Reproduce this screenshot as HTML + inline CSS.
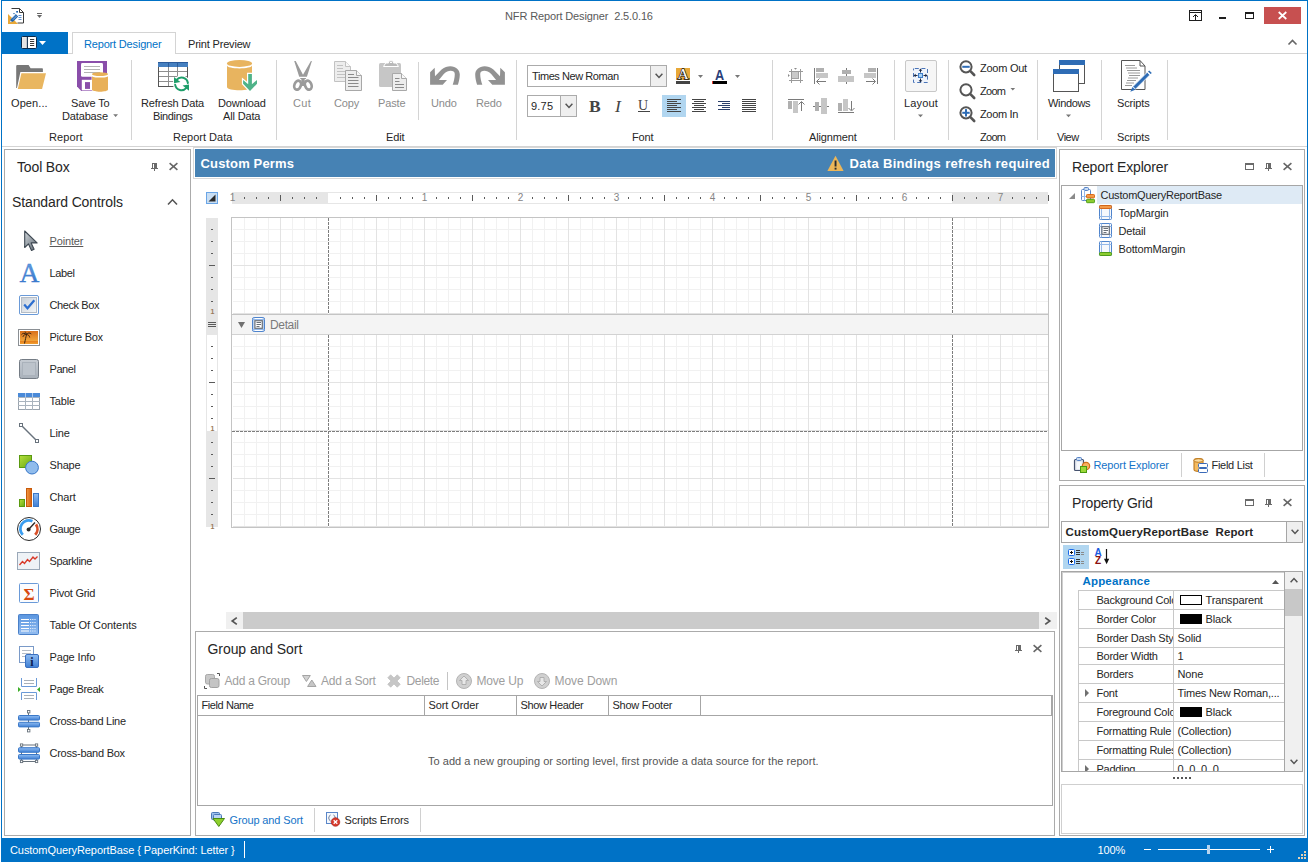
<!DOCTYPE html>
<html lang="en">
<head>
<meta charset="utf-8">
<title>NFR Report Designer 2.5.0.16</title>
<style>
html,body{margin:0;padding:0;}
body{width:1310px;height:866px;background:#fff;position:relative;overflow:hidden;
 font-family:"Liberation Sans",sans-serif;font-size:11px;color:#262626;line-height:1;}
*{box-sizing:border-box;}
.a{position:absolute;}
.t{position:absolute;white-space:pre;line-height:1;letter-spacing:-0.15px;}
svg{position:absolute;overflow:visible;}
.win{left:1px;top:0;width:1307px;height:862px;border:1px solid #0072c6;background:#fff;}
.panel{border:1px solid #ababab;background:#fff;}
.ptitle{font-size:15px;color:#262626;}
.sep{width:1px;background:#d4d4d4;}
.gcap{font-size:11px;color:#262626;}
.tb{font-size:11px;color:#262626;}
.dis{color:#8c8c8c;}
</style>
</head>
<body>
<div class="a win"></div>
<!-- ===== Title bar ===== -->
<div class="a" id="titlebar" style="left:2px;top:1px;width:1305px;height:31px;">
  <!-- app icon -->
  <svg style="left:6px;top:7px" width="16" height="16" viewBox="0 0 16 16">
    <path d="M3.5 0.5h8l4 4v10.5h-6" fill="#fff" stroke="#3a3a3a" stroke-width="1"/>
    <path d="M11.5 0.5v4h4" fill="none" stroke="#3a3a3a" stroke-width="1"/>
    <path d="M10.5 7.5h3M10.5 9.5h3M10.5 11.5h3" stroke="#5b8fd0" stroke-width="1"/>
    <path d="M0 6v10h10z" fill="#e8a838"/>
    <path d="M2 14.3l0.8-3.2 5-5 2.4 2.4-5 5z" fill="#1e63b0"/>
    <path d="M2 14.3l.5-1.9 1.4 1.4z" fill="#fff"/>
    <path d="M3.6 10.6l4-4M4.8 11.8l4-4" stroke="#fff" stroke-width=".5"/>
    <rect x="8.2" y="3" width="1.8" height="1.6" fill="#1e63b0"/>
    <rect x="5.4" y="5" width="1.2" height="1.1" fill="#1e63b0"/>
  </svg>
  <!-- quick access dropdown -->
  <svg style="left:35px;top:12px" width="5" height="5" viewBox="0 0 5 5"><rect x="0" y="0" width="5" height="1" fill="#666"/><path d="M0 2h5L2.5 5z" fill="#666"/></svg>
  <span class="t" style="left:503px;top:10px;color:#595959;letter-spacing:-0.13px">NFR Report Designer  2.5.0.16</span>
  <!-- window buttons -->
  <svg style="left:1187px;top:9px" width="13" height="11" viewBox="0 0 13 11" shape-rendering="crispEdges">
    <rect x="0.5" y="0.5" width="12" height="10" fill="none" stroke="#1e1e1e"/>
    <rect x="1" y="2" width="11" height="1" fill="#1e1e1e"/>
    <rect x="6" y="5" width="1" height="5" fill="#1e1e1e"/>
    <path d="M4 7l2.5-2.5L9 7" fill="none" stroke="#1e1e1e" shape-rendering="auto"/>
  </svg>
  <div class="a" style="left:1217px;top:16px;width:7px;height:2px;background:#1e1e1e"></div>
  <div class="a" style="left:1243px;top:11px;width:9px;height:7px;border:1px solid #1e1e1e;border-top-width:2px"></div>
  <div class="a" style="left:1262px;top:6px;width:37px;height:17px;background:#c75050"></div>
  <svg style="left:1276px;top:11px" width="9" height="7" viewBox="0 0 9 7"><path d="M0.7 0l7.6 7M8.3 0L0.7 7" stroke="#fff" stroke-width="1.7" fill="none"/></svg>
</div>
<!-- ===== Ribbon tab row ===== -->
<div class="a" id="tabrow" style="left:2px;top:32px;width:1305px;height:22px;">
  <div class="a" style="left:0;top:21px;width:1305px;height:1px;background:#d4d4d4"></div>
  <div class="a" id="appbtn" style="left:0;top:0;width:66px;height:22px;background:#0072c6">
    <svg style="left:19px;top:4px" width="16" height="13" viewBox="0 0 16 13">
      <rect x="0.5" y="0.5" width="15" height="12" rx="1.2" fill="#fff" stroke="#0a2a4a" stroke-width="1"/>
      <rect x="1.2" y="1.2" width="4.3" height="10.6" fill="#e4e4e4"/>
      <rect x="5.8" y="0.8" width="1.1" height="11.6" fill="#0a2a4a"/>
      <path d="M9 3.5h4.2M9 5.5h4.2M9 7.5h4.2M9 9.5h4.2" stroke="#3a3a3a" stroke-width="1"/>
    </svg>
    <svg style="left:37px;top:9px" width="7" height="4" viewBox="0 0 7 4"><path d="M0 0h7L3.5 4z" fill="#fff"/></svg>
  </div>
  <div class="a" id="tab-designer" style="left:70px;top:0;width:104px;height:22px;border:1px solid #d4d4d4;border-bottom:none;background:#fff">
    <span class="t" style="left:11px;top:6px;color:#0072c6;letter-spacing:-0.175px">Report Designer</span>
  </div>
  <span class="t" id="tab-preview" style="left:186px;top:7px;color:#262626;letter-spacing:-0.19px">Print Preview</span>
  <svg style="left:1286px;top:7px" width="9" height="7" viewBox="0 0 9 7"><path d="M0.5 5.5l4-4 4 4" stroke="#666" stroke-width="1.6" fill="none"/></svg>
</div>
<!-- ===== Ribbon ===== -->
<div class="a" id="ribbon" style="left:2px;top:54px;width:1305px;height:93px;background:#fff;border-bottom:1px solid #d4d4d4"></div>
<!-- group separators -->
<div class="a sep" style="left:131px;top:60px;height:80px"></div>
<div class="a sep" style="left:276px;top:60px;height:80px"></div>
<div class="a sep" style="left:418px;top:62px;height:58px"></div>
<div class="a sep" style="left:516px;top:60px;height:80px"></div>
<div class="a sep" style="left:772px;top:60px;height:80px"></div>
<div class="a sep" style="left:894px;top:60px;height:80px"></div>
<div class="a sep" style="left:948px;top:60px;height:80px"></div>
<div class="a sep" style="left:1037px;top:60px;height:80px"></div>
<div class="a sep" style="left:1101px;top:60px;height:80px"></div>
<div class="a sep" style="left:1167px;top:60px;height:80px"></div>
<!-- group captions -->
<span class="t gcap" style="left:49px;top:132px;letter-spacing:.1px">Report</span>
<span class="t gcap" style="left:173px;top:132px;letter-spacing:0">Report Data</span>
<span class="t gcap" style="left:386px;top:132px">Edit</span>
<span class="t gcap" style="left:632px;top:132px">Font</span>
<span class="t gcap" style="left:809px;top:132px">Alignment</span>
<span class="t gcap" style="left:980px;top:132px;letter-spacing:-0.7px">Zoom</span>
<span class="t gcap" style="left:1057px;top:132px;letter-spacing:-0.5px">View</span>
<span class="t gcap" style="left:1117px;top:132px">Scripts</span>
<!-- large button captions -->
<span class="t tb" style="left:11px;top:98px;letter-spacing:.1px">Open...</span>
<span class="t tb" style="left:71px;top:98px">Save To</span>
<span class="t tb" style="left:62px;top:111px">Database</span>
<span class="t tb" style="left:141px;top:98px">Refresh Data</span>
<span class="t tb" style="left:153px;top:111px;letter-spacing:-0.35px">Bindings</span>
<span class="t tb" style="left:218px;top:98px">Download</span>
<span class="t tb" style="left:223px;top:111px">All Data</span>
<span class="t tb dis" style="left:293px;top:98px;letter-spacing:.3px">Cut</span>
<span class="t tb dis" style="left:334px;top:98px">Copy</span>
<span class="t tb dis" style="left:378px;top:98px">Paste</span>
<span class="t tb dis" style="left:431px;top:98px">Undo</span>
<span class="t tb dis" style="left:476px;top:98px">Redo</span>
<span class="t tb" style="left:904px;top:98px;letter-spacing:.15px">Layout</span>
<span class="t tb" style="left:980px;top:63px;letter-spacing:-0.25px">Zoom Out</span>
<span class="t tb" style="left:980px;top:86px;letter-spacing:-0.7px">Zoom</span>
<span class="t tb" style="left:980px;top:109px;letter-spacing:-0.35px">Zoom In</span>
<span class="t tb" style="left:1048px;top:98px;letter-spacing:-0.35px">Windows</span>
<span class="t tb" style="left:1117px;top:98px">Scripts</span>
<!-- font combo boxes -->
<div class="a" id="fontname" style="left:527px;top:65px;width:140px;height:22px;border:1px solid #ababab;background:#fff">
  <span class="t" style="left:4px;top:5px;color:#262626;letter-spacing:-0.43px">Times New Roman</span>
  <div class="a" style="left:122px;top:-1px;width:17px;height:22px;border:1px solid #ababab;background:#efefef"></div>
  <svg style="left:127px;top:7px" width="8" height="6" viewBox="0 0 8 6"><path d="M0.6 0.8l3.4 3.6 3.4-3.6" fill="none" stroke="#555" stroke-width="1.5"/></svg>
</div>
<div class="a" id="fontsize" style="left:527px;top:95px;width:50px;height:22px;border:1px solid #ababab;background:#fff">
  <span class="t" style="left:3px;top:5px;color:#262626;letter-spacing:.2px">9.75</span>
  <div class="a" style="left:32px;top:-1px;width:17px;height:22px;border:1px solid #ababab;background:#efefef"></div>
  <svg style="left:37px;top:7px" width="8" height="6" viewBox="0 0 8 6"><path d="M0.6 0.8l3.4 3.6 3.4-3.6" fill="none" stroke="#555" stroke-width="1.5"/></svg>
</div>
<!-- B I U -->
<span class="t" style="left:589px;top:98px;font-family:'Liberation Serif',serif;font-weight:bold;font-size:17.5px;color:#444;letter-spacing:0">B</span>
<span class="t" style="left:615px;top:98px;font-family:'Liberation Serif',serif;font-style:italic;font-size:17.5px;color:#444;letter-spacing:0">I</span>
<span class="t" style="left:638px;top:99px;font-family:'Liberation Serif',serif;font-size:14px;color:#444;letter-spacing:0">U</span>
<div class="a" style="left:638px;top:111px;width:12px;height:1px;background:#444"></div>
<!-- align-left highlighted -->
<div class="a" style="left:662px;top:95px;width:24px;height:22px;background:#b1d6f0"></div>
<!-- Layout button frame -->
<div class="a" style="left:905px;top:60px;width:32px;height:32px;border:1px solid #c8c8c8;border-radius:2px;background:#f6f6f6"></div>
<!-- ===== Ribbon icons (absolute page coordinates) ===== -->
<svg id="ribbon-icons" style="left:0;top:0" width="1310" height="150" viewBox="0 0 1310 150">
  <!-- Open (folder) -->
  <path d="M16.200 66q0-1 1-1h11.400l2 3.200h11.600q.700 0 .700.700v3.100H20.400l-3.400 16h-.800z" fill="#777"/>
  <path d="M21.400 73.200H46l-3.900 15.700H17.800z" fill="#e9b660" stroke="#fff" stroke-width="1" paint-order="stroke"/>
  <!-- Save to database -->
  <path d="M77 61h30v30H81.300L77 86.600z" fill="#8a4eaa"/>
  <rect x="81" y="63" width="22" height="13.800" rx="1.400" fill="#fff"/>
  <path d="M84 66.500h16M84 69.500h16M84 72.500h16" stroke="#b4b4b4" stroke-width="1"/>
  <rect x="81.800" y="79.800" width="12.200" height="10.600" fill="#fff"/>
  <rect x="85" y="82.100" width="5" height="6.800" fill="#8a4eaa"/>
  <path d="M91.600 74v15.800c0 3 17 3 17 0V74z" fill="#fff"/>
  <path d="M92 75.900v13.700c0 2.900 16 2.900 16 0V75.900c0 2.200-16 2.200-16 0z" fill="#e8b058"/>
  <ellipse cx="100" cy="74.200" rx="8" ry="1.900" fill="#e8b058"/>
  <path d="M113.200 114.300h4.800l-2.400 2.800z" fill="#777"/>
  <!-- Refresh data bindings (table) -->
  <rect x="158.500" y="62.500" width="29" height="24" fill="#fff" stroke="#555"/>
  <path d="M159 71.500h28M159 76.500h28M159 81.500h28M168.500 67v19M177.500 67v19" stroke="#8e8e8e" stroke-width="1" fill="none"/>
  <rect x="158" y="62" width="30" height="5" fill="#4680c0"/>
  <rect x="158" y="62" width="30" height="1" fill="#2c5c9c"/>
  <path d="M168.500 62v5M177.500 62v5" stroke="#2c5c9c" stroke-width="1"/>
  <circle cx="181.500" cy="83.800" r="8.600" fill="#fff"/>
  <g fill="none" stroke="#1e9e6a" stroke-width="2" stroke-linecap="round">
    <path d="M187.900 83A6.400 6.400 0 0 0 176.600 79.800"/>
    <path d="M175.200 84.800A6.400 6.400 0 0 0 186.400 87.900"/>
  </g>
  <path d="M174 77v6.200l6.400-1.100z" fill="#1e9e6a"/>
  <path d="M189 90.700v-6.200l-6.400 1.100z" fill="#1e9e6a"/>
  <!-- Download all data -->
  <path d="M227 65.300v21.700c0 4.400 25 4.400 25 0V65.300c0 4.200-25 4.200-25 0z" fill="#e8b45f"/>
  <ellipse cx="239.500" cy="63.400" rx="12.600" ry="3.500" fill="#e8b45f"/>
  <path d="M248.200 74H251.900V84.200L257 80V83.800L250 91.100L243.100 83.800V80L248.200 84.200Z" fill="#fff" stroke="#fff" stroke-width="2.400" stroke-linejoin="miter"/>
  <path d="M248.200 74H251.900V84.200L257 80V83.800L250 91.100L243.100 83.800V80L248.200 84.200Z" fill="#4fb389"/>
  <!-- Cut -->
  <path d="M294.200 61L295.700 61L303 74.800L310.900 61L311.900 61L306.900 76.800L299.200 76.800Z" fill="#9b9b9b"/>
  <path d="M300.300 77.900h5.600v1h-1.200v7h-3.400v-7h-1z" fill="#9b9b9b"/>
  <g fill="none" stroke="#9b9b9b" stroke-width="2.700">
    <ellipse cx="297.600" cy="85.200" rx="3.200" ry="4.600" transform="rotate(20 297.600 85.200)"/>
    <ellipse cx="308.300" cy="85.200" rx="3.200" ry="4.600" transform="rotate(-20 308.300 85.200)"/>
  </g>
  <!-- Copy -->
  <path d="M334.500 61.500h11l5 5v15h-16z" fill="#ededed" stroke="#c2c2c2"/>
  <path d="M345.500 61.500v5h5" fill="#f8f8f8" stroke="#c2c2c2"/>
  <path d="M337 65.500h6M337 68.500h6M337 71.500h10M337 74.500h10M337 77.500h10" stroke="#c2c2c2"/>
  <path d="M345.500 70.500h11l5 5v15h-16z" fill="#ededed" stroke="#a8a8a8"/>
  <path d="M356.500 70.500v5h5" fill="#f8f8f8" stroke="#a8a8a8"/>
  <path d="M348 74.500h6M348 77.500h10.500M348 80.500h10.500M348 83.500h10.500M348 86.500h10.500" stroke="#8a8a8a"/>
  <!-- Paste -->
  <rect x="379" y="63" width="22" height="24" rx="1.500" fill="#c6c6c6"/>
  <path d="M383.500 66.500l2.200-3.500h2.800c0-3.600 5-3.600 5 0h2.800l2.200 3.500z" fill="#b9b9b9" stroke="#fff" stroke-width="1"/>
  <rect x="390" y="61.700" width="2" height="1.300" fill="#fff"/>
  <path d="M392.500 73.500h9l5 5v12h-14z" fill="#ededed" stroke="#a8a8a8"/>
  <path d="M401.500 73.500v5h5" fill="#f8f8f8" stroke="#a8a8a8"/>
  <path d="M395 78.500h4.500M395 81.500h4.500M395 84.500h9M395 87.500h9" stroke="#8a8a8a"/>
  <!-- Undo -->
  <path d="M430.100 72.300L434.700 67.800L435 76.300L441.600 69.400C444.500 67 447.500 66.200 450.300 66.200C456 66.200 459.800 70 459.800 74.500C459.800 78 458.800 82 457.900 84.800L452.700 84.800C453.800 81.500 454.800 77.500 454.800 73.900C454.800 71.800 453 70.700 450.600 70.700C448.500 70.700 446 71.800 443.800 74L438.900 79.900L447 79.900L442.700 84.800L430.100 84.800Z" fill="#929292"/>
  <!-- Redo -->
  <path d="M430.100 72.300L434.700 67.800L435 76.300L441.600 69.400C444.500 67 447.500 66.200 450.300 66.200C456 66.200 459.800 70 459.800 74.500C459.800 78 458.800 82 457.900 84.800L452.700 84.800C453.800 81.500 454.800 77.500 454.800 73.900C454.800 71.800 453 70.700 450.600 70.700C448.500 70.700 446 71.800 443.800 74L438.900 79.900L447 79.900L442.700 84.800L430.100 84.800Z" fill="#929292" transform="translate(935 0) scale(-1 1)"/>
</svg>
<!-- ===== Ribbon icons part 2: font / alignment / layout / zoom / view / scripts ===== -->
<svg id="ribbon-icons2" style="left:0;top:0" width="1310" height="150" viewBox="0 0 1310 150">
  <!-- highlight color -->
  <rect x="676" y="68" width="14" height="12" fill="#e8a838"/>
  <text x="683" y="79.300" text-anchor="middle" font-family="Liberation Serif, serif" font-size="15.500" fill="#fff" stroke="#111" stroke-width="1.300" paint-order="stroke" style="-webkit-font-smoothing:antialiased">A</text>
  <rect x="676" y="81" width="14" height="3" fill="#444"/>
  <path d="M698 75h5l-2.500 3z" fill="#777"/>
  <!-- font color -->
  <text transform="translate(719.500 79.700) scale(.82 1)" x="0" y="0" text-anchor="middle" font-family="Liberation Sans, sans-serif" font-size="15.500" font-weight="bold" fill="#2a3f7a">A</text>
  <rect x="712" y="81" width="15" height="3" fill="#000"/>
  <rect x="712" y="81" width="1" height="3" fill="#e03c31"/>
  <path d="M735 75h5l-2.500 3z" fill="#777"/>
  <!-- text align buttons -->
  <g fill="#444" shape-rendering="crispEdges">
    <rect x="667" y="99" width="14" height="1"/><rect x="667" y="101" width="10" height="1"/><rect x="667" y="103" width="14" height="1"/><rect x="667" y="105" width="10" height="1"/><rect x="667" y="107" width="14" height="1"/><rect x="667" y="109" width="10" height="1"/><rect x="667" y="111" width="14" height="1"/>
    <rect x="692" y="99" width="14" height="1"/><rect x="694" y="101" width="10" height="1"/><rect x="692" y="103" width="14" height="1"/><rect x="694" y="105" width="10" height="1"/><rect x="692" y="107" width="14" height="1"/><rect x="694" y="109" width="10" height="1"/><rect x="692" y="111" width="14" height="1"/>
    <rect x="742" y="99" width="14" height="1"/><rect x="742" y="101" width="14" height="1"/><rect x="742" y="103" width="14" height="1"/><rect x="742" y="105" width="14" height="1"/><rect x="742" y="107" width="14" height="1"/><rect x="742" y="109" width="14" height="1"/><rect x="742" y="111" width="14" height="1"/>
  </g>
  <g fill="#2a3f6a" shape-rendering="crispEdges">
    <rect x="718" y="101" width="12" height="1"/><rect x="722" y="103" width="8" height="1"/><rect x="718" y="105" width="12" height="1"/><rect x="722" y="107" width="8" height="1"/><rect x="718" y="109" width="12" height="1"/>
  </g>
  <!-- alignment group (disabled) -->
  <g shape-rendering="crispEdges">
    <!-- align to grid -->
    <rect x="791" y="69" width="1" height="14" fill="#9a9a9a"/><rect x="800" y="69" width="1" height="14" fill="#9a9a9a"/>
    <rect x="789" y="71" width="14" height="1" fill="#9a9a9a"/><rect x="789" y="80" width="14" height="1" fill="#9a9a9a"/>
    <rect x="792" y="72" width="7" height="7" fill="#c9c9c9"/><rect x="798" y="72" width="1" height="7" fill="#a2a2a2"/><rect x="792" y="78" width="7" height="1" fill="#a2a2a2"/>
    <!-- align lefts -->
    <rect x="814" y="68" width="1" height="16" fill="#7a7a7a"/>
    <rect x="816" y="68" width="8" height="4" fill="#b0b0b0"/><rect x="816" y="73" width="12" height="5" fill="#c6c6c6"/>
    <rect x="817" y="81" width="9" height="1" fill="#7a7a7a"/>
    <!-- align centers -->
    <rect x="846" y="68" width="1" height="16" fill="#7a7a7a"/>
    <rect x="842" y="70" width="9" height="4" fill="#b0b0b0"/><rect x="838" y="76" width="16" height="6" fill="#c6c6c6"/>
    <!-- align rights -->
    <rect x="877" y="68" width="1" height="16" fill="#7a7a7a"/>
    <rect x="868" y="68" width="8" height="4" fill="#b0b0b0"/><rect x="864" y="73" width="12" height="5" fill="#c6c6c6"/>
    <rect x="866" y="81" width="9" height="1" fill="#7a7a7a"/>
    <!-- align tops -->
    <rect x="788" y="99" width="16" height="1" fill="#7a7a7a"/>
    <rect x="788" y="101" width="4" height="8" fill="#b0b0b0"/><rect x="793" y="101" width="5" height="12" fill="#c6c6c6"/>
    <rect x="801" y="102" width="1" height="9" fill="#7a7a7a"/>
    <!-- align middles -->
    <rect x="813" y="106" width="16" height="1" fill="#7a7a7a"/>
    <rect x="815" y="102" width="4" height="9" fill="#b0b0b0"/><rect x="821" y="98" width="6" height="16" fill="#c6c6c6"/>
    <!-- align bottoms -->
    <rect x="838" y="112" width="16" height="1" fill="#7a7a7a"/>
    <rect x="838" y="103" width="4" height="8" fill="#b0b0b0"/><rect x="843" y="99" width="5" height="12" fill="#c6c6c6"/>
    <rect x="851" y="101" width="1" height="9" fill="#7a7a7a"/>
  </g>
  <g fill="none" stroke="#7a7a7a" stroke-width="1">
    <path d="M819.500 78.500l-3 3 3 3"/><path d="M872.500 78.500l3 3-3 3"/>
    <path d="M798.500 104.500l3-3 3 3"/><path d="M848.500 108l3 3 3-3"/>
  </g>
  <path d="M794 68h3l-1.500 1.800z" fill="#8a8a8a"/><path d="M788 74v3l1.800-1.500z" fill="#8a8a8a"/>
  <!-- layout icon -->
  <rect x="913.500" y="68.500" width="14" height="14" fill="#eef3fb" stroke="#4a74b8" stroke-width="1" stroke-dasharray="4 2.600" stroke-dashoffset="-1.300"/>
  <rect x="918.500" y="73.500" width="4" height="4" fill="#a9d3f5" stroke="#3d7cc9" stroke-width="1"/>
  <g fill="#1e2a44">
    <path d="M920.500 68.500l1.800 2.200h-3.600z"/><rect x="920" y="70" width="1" height="2.500"/>
    <path d="M920.500 82.500l1.800-2.200h-3.600z"/><rect x="920" y="78.500" width="1" height="2.500"/>
    <path d="M913.500 75.500l2.200-1.800v3.600z"/><rect x="915" y="75" width="2.500" height="1"/>
    <path d="M927.500 75.500l-2.200-1.800v3.600z"/><rect x="923.500" y="75" width="2.500" height="1"/>
  </g>
  <path d="M918 114.500h5l-2.500 2.800z" fill="#777"/>
  <!-- zoom out / zoom / zoom in -->
  <g fill="none" stroke="#555" stroke-linecap="round">
    <circle cx="966" cy="66.800" r="5.600" stroke-width="2"/><path d="M970.400 71.200l3.800 3.800" stroke-width="2.600"/>
    <circle cx="966" cy="89.800" r="5.600" stroke-width="2"/><path d="M970.400 94.200l3.800 3.800" stroke-width="2.600"/>
    <circle cx="966" cy="112.800" r="5.600" stroke-width="2"/><path d="M970.400 117.200l3.800 3.800" stroke-width="2.600"/>
  </g>
  <rect x="962.300" y="65.800" width="7.400" height="2" fill="#2e6cb5"/>
  <rect x="962.300" y="111.800" width="7.400" height="2" fill="#2e6cb5"/><rect x="965" y="109.100" width="2" height="7.400" fill="#2e6cb5"/>
  <path d="M1010.500 88h4.600l-2.300 2.600z" fill="#777"/>
  <!-- windows -->
  <g shape-rendering="crispEdges">
    <rect x="1059.500" y="60.500" width="25" height="23" fill="#fff" stroke="#555"/>
    <rect x="1059" y="60" width="26" height="5" fill="#2e6cb5"/>
    <rect x="1053.500" y="69.500" width="25" height="22" fill="#fff" stroke="#555"/>
    <rect x="1053" y="69" width="26" height="5" fill="#2e6cb5"/>
  </g>
  <path d="M1066 114.500h5l-2.500 2.800z" fill="#777"/>
  <!-- scripts -->
  <path d="M1121.500 60.500h18.500l5 5.500v23.500h-23.500z" fill="#fff" stroke="#555" stroke-width="1"/>
  <path d="M1140 60.500v5.500h5" fill="none" stroke="#555" stroke-width="1"/>
  <path d="M1125 65.500h10M1126 68h11M1127 70.500h13M1128 73h12M1129 75.500h11M1128 78h10M1127 80.500h9M1126 83h8M1125 85.500h7" stroke="#9a9a9a" stroke-width="1"/>
  <path d="M1147.200 72.300l2.600 2.600-14.300 14.300-2.600-2.600z" fill="#2e6cb5" stroke="#fff" stroke-width=".8"/>
  <path d="M1148 71.500l1.200-1.100 2.600 2.600-1.200 1.100z" fill="#2e6cb5"/>
  <path d="M1132.500 87l2.800 2.800-5 2z" fill="#2e6cb5"/>
</svg>
<!-- ===== Tool Box panel ===== -->
<div class="a panel" id="toolbox" style="left:4px;top:149px;width:187px;height:687px"></div>
<span class="t ptitle" style="left:17px;top:160px;font-size:14px;letter-spacing:-0.14px">Tool Box</span>
<svg style="left:151px;top:163px" width="7" height="8" viewBox="0 0 7 8" shape-rendering="crispEdges"><g fill="#6a6a6a"><rect x="1" y="0" width="5" height="1"/><rect x="1" y="1" width="1" height="4"/><rect x="3" y="1" width="3" height="4"/><rect x="0" y="5" width="7" height="1"/><rect x="3" y="6" width="1" height="2"/></g></svg>
<svg style="left:169px;top:163px" width="9" height="7" viewBox="0 0 9 7"><path d="M0.600 0.200l7.800 6.600M8.400 0.200L0.600 6.800" stroke="#666" stroke-width="1.600" fill="none"/></svg>
<span class="t" style="left:12px;top:195px;font-size:14px;letter-spacing:-0.12px;color:#262626">Standard Controls</span>
<svg style="left:167px;top:198px" width="11" height="8" viewBox="0 0 11 8"><path d="M1 6.500l4.500-4.700 4.500 4.700" stroke="#555" stroke-width="1.600" fill="none"/></svg>
<span class="t" style="left:49.500px;top:236px;color:#595959;text-decoration:underline;text-underline-offset:1px">Pointer</span>
<span class="t" style="left:49.500px;top:268px;color:#262626;letter-spacing:-0.35px">Label</span>
<span class="t" style="left:49.500px;top:300px;color:#262626;letter-spacing:-0.4px">Check Box</span>
<span class="t" style="left:49.500px;top:332px;color:#262626;letter-spacing:-0.27px">Picture Box</span>
<span class="t" style="left:49.500px;top:364px;color:#262626;letter-spacing:-0.45px">Panel</span>
<span class="t" style="left:49.500px;top:396px;color:#262626">Table</span>
<span class="t" style="left:49.500px;top:428px;color:#262626">Line</span>
<span class="t" style="left:49.500px;top:460px;color:#262626">Shape</span>
<span class="t" style="left:49.500px;top:492px;color:#262626">Chart</span>
<span class="t" style="left:49.500px;top:524px;color:#262626;letter-spacing:-0.5px">Gauge</span>
<span class="t" style="left:49.500px;top:556px;color:#262626;letter-spacing:-0.38px">Sparkline</span>
<span class="t" style="left:49.500px;top:588px;color:#262626;letter-spacing:-0.27px">Pivot Grid</span>
<span class="t" style="left:49.500px;top:620px;color:#262626;letter-spacing:-0.05px">Table Of Contents</span>
<span class="t" style="left:49.500px;top:652px;color:#262626">Page Info</span>
<span class="t" style="left:49.500px;top:684px;color:#262626;letter-spacing:-0.35px">Page Break</span>
<span class="t" style="left:49.500px;top:716px;color:#262626;letter-spacing:-0.3px">Cross-band Line</span>
<span class="t" style="left:49.500px;top:748px;color:#262626;letter-spacing:-0.25px">Cross-band Box</span>
<!-- ===== Tool Box icons (absolute page coordinates) ===== -->
<svg id="toolbox-icons" style="left:0;top:0" width="200" height="780" viewBox="0 0 200 780">
  <defs>
    <linearGradient id="gGrey" x1="0" y1="0" x2="1" y2="1"><stop offset="0" stop-color="#cfd5da"/><stop offset="1" stop-color="#5e6871"/></linearGradient>
    <linearGradient id="gBlueA" x1="0" y1="0" x2="0" y2="1"><stop offset="0" stop-color="#6ea6e6"/><stop offset="1" stop-color="#2d6fc4"/></linearGradient>
    <linearGradient id="gChk" x1="0" y1="0" x2="1" y2="1"><stop offset="0" stop-color="#c9d0d8"/><stop offset="1" stop-color="#f4f6f8"/></linearGradient>
    <linearGradient id="gSun" x1="0" y1="0" x2="0" y2="1"><stop offset="0" stop-color="#d9701c"/><stop offset=".75" stop-color="#f0a43a"/><stop offset=".8" stop-color="#e8821e"/><stop offset="1" stop-color="#f0a030"/></linearGradient>
    <linearGradient id="gPanel" x1="0" y1="0" x2="0" y2="1"><stop offset="0" stop-color="#c6ccd3"/><stop offset="1" stop-color="#a9b1ba"/></linearGradient>
    <linearGradient id="gBar" x1="0" y1="0" x2="0" y2="1"><stop offset="0" stop-color="#8ebcf2"/><stop offset="1" stop-color="#3f7fd4"/></linearGradient>
    <linearGradient id="gGreen" x1="0" y1="0" x2="1" y2="1"><stop offset="0" stop-color="#b4e03c"/><stop offset="1" stop-color="#6aa814"/></linearGradient>
    <linearGradient id="gOrange" x1="0" y1="0" x2="1" y2="0"><stop offset="0" stop-color="#f09a48"/><stop offset="1" stop-color="#d8600c"/></linearGradient>
    <linearGradient id="gToc" x1="0" y1="0" x2="0" y2="1"><stop offset="0" stop-color="#5a96e0"/><stop offset="1" stop-color="#92bcf0"/></linearGradient>
  </defs>
  <!-- 0 Pointer -->
  <path d="M24.700 231v16.500l3.800-3.600 3 6.600 2.600-1.200-3-6.400h6z" fill="url(#gGrey)" stroke="#3e4852" stroke-width="1.100" stroke-linejoin="round"/>
  <!-- 1 Label -->
  <text x="29.400" y="282" text-anchor="middle" font-family="Liberation Serif, serif" font-size="27.500" fill="url(#gBlueA)" stroke="#3a7ad0" stroke-width=".350">A</text>
  <!-- 2 Check Box -->
  <rect x="19.500" y="295.500" width="19" height="19" rx="1.500" fill="#fff" stroke="#6a9ad8"/>
  <rect x="21.500" y="297.500" width="15" height="15" fill="url(#gChk)" stroke="#b4bcc6" stroke-width="1"/>
  <path d="M24.200 304.600l3.300 3.700 6.800-8" fill="none" stroke="#2d6fd0" stroke-width="2.200"/>
  <!-- 3 Picture Box -->
  <rect x="18.500" y="329.500" width="21" height="16" fill="#fff" stroke="#8a8f94"/>
  <rect x="20" y="331" width="18" height="13" fill="url(#gSun)"/>
  <path d="M24.500 343.500c.8-4 1.500-6.500 2-9" fill="none" stroke="#3a2410" stroke-width="1"/>
  <path d="M26.500 334.500c-2-1.600-3.600-1.600-5 .2M26.500 334.500c-1.600-.4-3 .6-3.600 2.400M26.500 334.500c1.400-1.800 3.200-2 4.800-.6M26.500 334.500c1.600 0 3 1.200 3.200 3M26.500 334.500c.2-1.400-.6-2.200-1.800-2.600" fill="none" stroke="#3a2410" stroke-width="1"/>
  <!-- 4 Panel -->
  <rect x="19.500" y="359.500" width="19" height="19" rx="2" fill="url(#gPanel)" stroke="#747c85"/>
  <rect x="22.500" y="362.500" width="13" height="13" fill="#bcc3cb" stroke="#aab2bb"/>
  <!-- 5 Table -->
  <rect x="18.500" y="393.500" width="21" height="16" fill="#fff" stroke="#9aa4ae"/>
  <rect x="18" y="393" width="22" height="4.500" fill="#4a8ad8"/>
  <path d="M18 397.500h22M18 401.500h22M18 405.500h22M25.500 393v17M32.500 393v17" stroke="#aab4be" stroke-width="1" fill="none"/>
  <path d="M25.500 393v4.500M32.500 393v4.500" stroke="#a8c8f0" stroke-width="1"/>
  <!-- 6 Line -->
  <path d="M21 425l16 16" stroke="#68727c" stroke-width="1.400"/>
  <rect x="19.500" y="423.500" width="3" height="3" fill="#fff" stroke="#68727c"/>
  <rect x="35.500" y="439.500" width="3" height="3" fill="#fff" stroke="#68727c"/>
  <!-- 7 Shape -->
  <rect x="19.500" y="455.500" width="12" height="12" fill="url(#gGreen)" stroke="#5a9a10"/>
  <circle cx="32" cy="467.600" r="6.400" fill="#90bcec" stroke="#3a78c8"/>
  <!-- 8 Chart -->
  <rect x="19.500" y="499.500" width="5" height="7" fill="url(#gGreen)" stroke="#5a9a10"/>
  <rect x="26.500" y="488.500" width="5" height="18" fill="url(#gOrange)" stroke="#c85a0a"/>
  <rect x="33.500" y="493.500" width="5" height="13" fill="url(#gBar)" stroke="#3a78c8"/>
  <!-- 9 Gauge -->
  <circle cx="29" cy="529" r="11.500" fill="#fff" stroke="#2a2a2a" stroke-width="1"/>
  <path d="M22.800 534.800a8.400 8.400 0 0 1 9.600-13.500" fill="none" stroke="#3a9df0" stroke-width="2.800"/>
  <path d="M36 524.400a8.400 8.400 0 0 1-.8 10.400" fill="none" stroke="#d85028" stroke-width="2.800"/>
  <path d="M29 529l6-6.400" stroke="#2a2a2a" stroke-width="1.400"/>
  <circle cx="28.600" cy="529.400" r="2" fill="#2a2a2a"/>
  <!-- 10 Sparkline -->
  <rect x="17.500" y="552.500" width="22" height="17" fill="#eef2f6" stroke="#9aa8b8"/>
  <path d="M19.500 565l3-3.500 2 2 3-4 2 2 3.500-4.500 2 2 2.500-2.500" fill="none" stroke="#d83828" stroke-width="1.300"/>
  <!-- 11 Pivot Grid -->
  <rect x="19.500" y="583.500" width="19" height="19" rx="1" fill="#fbfcfe" stroke="#6a9ad8"/>
  <text x="29" y="599.500" text-anchor="middle" font-family="Liberation Serif, serif" font-size="17" font-weight="bold" fill="#d84a10">Σ</text>
  <!-- 12 Table Of Contents -->
  <rect x="18.500" y="614.500" width="20" height="20" rx="1" fill="url(#gToc)" stroke="#4a80c8"/>
  <path d="M21 619.500h8M21 622.500h8M21 625.500h8M21 628.500h8M21 631h8" stroke="#fff" stroke-width="1.200"/>
  <path d="M30 619.500h6M30 622.500h6M30 625.500h6M30 628.500h6M30 631h6" stroke="#e4effc" stroke-width="1.200" stroke-dasharray="1.200 1"/>
  <!-- 13 Page Info -->
  <rect x="19.500" y="646.500" width="14" height="16" fill="#fff" stroke="#7a9ac8"/>
  <path d="M22 650.500h9M22 653.500h9M22 656.500h4" stroke="#b4bcc6"/>
  <rect x="25.500" y="654.500" width="13" height="13" rx="1.500" fill="url(#gBar)" stroke="#3a70c0"/>
  <text x="32" y="665.500" text-anchor="middle" font-family="Liberation Serif, serif" font-size="12" font-weight="bold" fill="#0c1c50">i</text>
  <!-- 14 Page Break -->
  <path d="M21.500 678v8.500h15V678" fill="#fff" stroke="#6a9ad8"/>
  <path d="M24 680.500h10M24 683.500h10" stroke="#a8b0b8"/>
  <path d="M21.500 700v-7.500h15v7.500" fill="#fff" stroke="#6a9ad8"/>
  <path d="M24 695.500h10M24 698.500h10" stroke="#a8b0b8"/>
  <path d="M18 687l3 2.500-3 2.500z" fill="#3cae28"/><path d="M40 687l-3 2.500 3 2.500z" fill="#3cae28"/>
  <!-- 15 Cross-band Line -->
  <path d="M28.500 711v20" stroke="#68727c" stroke-width="1"/>
  <rect x="18.500" y="715.500" width="21" height="4.600" rx="1" fill="url(#gBar)" stroke="#3a78c8"/>
  <rect x="18.500" y="722.300" width="21" height="4.600" rx="1" fill="url(#gBar)" stroke="#3a78c8"/>
  <rect x="27.500" y="710.500" width="2.400" height="2.400" fill="#fff" stroke="#68727c" stroke-width=".9"/>
  <rect x="27.500" y="729.500" width="2.400" height="2.400" fill="#fff" stroke="#68727c" stroke-width=".9"/>
  <!-- 16 Cross-band Box -->
  <rect x="21.500" y="745" width="15" height="16.500" fill="none" stroke="#68727c"/>
  <rect x="18.500" y="747.700" width="21" height="4.600" rx="1" fill="url(#gBar)" stroke="#3a78c8"/>
  <rect x="18.500" y="754.500" width="21" height="4.600" rx="1" fill="url(#gBar)" stroke="#3a78c8"/>
  <g fill="#fff" stroke="#68727c" stroke-width=".9"><rect x="20.400" y="743.900" width="2.300" height="2.300"/><rect x="35.400" y="743.900" width="2.300" height="2.300"/><rect x="20.400" y="760.300" width="2.300" height="2.300"/><rect x="35.400" y="760.300" width="2.300" height="2.300"/></g>
</svg>
<!-- ===== Designer (center) ===== -->
<div class="a" id="designer-caption" style="left:193px;top:147px;width:864px;height:32px;border:1px solid #d8d8d8;background:#fff">
  <div class="a" style="left:1px;top:1px;width:860px;height:28px;background:#4682b4"></div>
  <span class="t" style="left:6.500px;top:9px;font-size:13px;font-weight:bold;color:#fff;letter-spacing:.16px">Custom Perms</span>
  <svg style="left:633px;top:7px" width="17" height="17" viewBox="0 0 17 17"><path d="M8.500 0.800L16.600 16H0.400z" fill="#ecb658"/><rect x="7.600" y="5.500" width="1.900" height="6" fill="#2a2a2a"/><rect x="7.600" y="12.700" width="1.900" height="1.900" fill="#2a2a2a"/></svg>
  <span class="t" style="left:655.500px;top:9px;font-size:13px;font-weight:bold;color:#fff;letter-spacing:.33px">Data Bindings refresh required</span>
</div>
<div class="a" style="left:206px;top:192px;width:12px;height:12px;border:1px solid #6aa5e6;background:#c9def3"></div>
<svg style="left:208px;top:194px" width="8" height="8" viewBox="0 0 8 8"><path d="M7.500 0.500v7h-7z" fill="#2a2a2a"/></svg>
<div class="a" id="hruler" style="left:232px;top:192px;width:816px;height:12px;background:#fff;border-top:1px solid #e6e6e6;border-bottom:1px solid #e6e6e6"></div>
<div class="a" style="left:232px;top:192px;width:96px;height:12px;background:#e6e6e6"></div>
<div class="a" style="left:952px;top:192px;width:96px;height:12px;background:#e6e6e6"></div>
<svg id="hruler-ticks" style="left:0;top:0" width="1310" height="210" viewBox="0 0 1310 210" shape-rendering="crispEdges"><g fill="#5a5a5a"><rect x="244" y="197" width="1" height="2"/><rect x="256" y="197" width="1" height="2"/><rect x="268" y="197" width="1" height="2"/><rect x="280" y="195" width="1" height="6"/><rect x="292" y="197" width="1" height="2"/><rect x="304" y="197" width="1" height="2"/><rect x="316" y="197" width="1" height="2"/><rect x="340" y="197" width="1" height="2"/><rect x="352" y="197" width="1" height="2"/><rect x="364" y="197" width="1" height="2"/><rect x="376" y="195" width="1" height="6"/><rect x="388" y="197" width="1" height="2"/><rect x="400" y="197" width="1" height="2"/><rect x="412" y="197" width="1" height="2"/><rect x="436" y="197" width="1" height="2"/><rect x="448" y="197" width="1" height="2"/><rect x="460" y="197" width="1" height="2"/><rect x="472" y="195" width="1" height="6"/><rect x="484" y="197" width="1" height="2"/><rect x="496" y="197" width="1" height="2"/><rect x="508" y="197" width="1" height="2"/><rect x="532" y="197" width="1" height="2"/><rect x="544" y="197" width="1" height="2"/><rect x="556" y="197" width="1" height="2"/><rect x="568" y="195" width="1" height="6"/><rect x="580" y="197" width="1" height="2"/><rect x="592" y="197" width="1" height="2"/><rect x="604" y="197" width="1" height="2"/><rect x="628" y="197" width="1" height="2"/><rect x="640" y="197" width="1" height="2"/><rect x="652" y="197" width="1" height="2"/><rect x="664" y="195" width="1" height="6"/><rect x="676" y="197" width="1" height="2"/><rect x="688" y="197" width="1" height="2"/><rect x="700" y="197" width="1" height="2"/><rect x="724" y="197" width="1" height="2"/><rect x="736" y="197" width="1" height="2"/><rect x="748" y="197" width="1" height="2"/><rect x="760" y="195" width="1" height="6"/><rect x="772" y="197" width="1" height="2"/><rect x="784" y="197" width="1" height="2"/><rect x="796" y="197" width="1" height="2"/><rect x="820" y="197" width="1" height="2"/><rect x="832" y="197" width="1" height="2"/><rect x="844" y="197" width="1" height="2"/><rect x="856" y="195" width="1" height="6"/><rect x="868" y="197" width="1" height="2"/><rect x="880" y="197" width="1" height="2"/><rect x="892" y="197" width="1" height="2"/><rect x="916" y="197" width="1" height="2"/><rect x="928" y="197" width="1" height="2"/><rect x="940" y="197" width="1" height="2"/><rect x="952" y="195" width="1" height="6"/><rect x="964" y="197" width="1" height="2"/><rect x="976" y="197" width="1" height="2"/><rect x="988" y="197" width="1" height="2"/><rect x="1012" y="197" width="1" height="2"/><rect x="1024" y="197" width="1" height="2"/><rect x="1036" y="197" width="1" height="2"/><rect x="1048" y="195" width="1" height="6"/><rect x="1048" y="195" width="1" height="6"/></g><g font-family="Liberation Sans, sans-serif" font-size="10" fill="#848484" text-anchor="middle"><text x="232.5" y="201">1</text><text x="424.5" y="201">1</text><text x="520.5" y="201">2</text><text x="616.5" y="201">3</text><text x="712.5" y="201">4</text><text x="808.5" y="201">5</text><text x="904.5" y="201">6</text><text x="1000.5" y="201">7</text></g></svg>
<div class="a" id="vruler" style="left:206px;top:218px;width:12px;height:309px;background:#e6e6e6"></div>
<div class="a" style="left:207px;top:335px;width:10px;height:96px;background:#fff"></div>
<svg id="vruler-ticks" style="left:0;top:0" width="230" height="540" viewBox="0 0 230 540" shape-rendering="crispEdges"><g fill="#5a5a5a"><rect x="211" y="229" width="2" height="1"/><rect x="211" y="241" width="2" height="1"/><rect x="211" y="253" width="2" height="1"/><rect x="209" y="265" width="6" height="1"/><rect x="211" y="277" width="2" height="1"/><rect x="211" y="289" width="2" height="1"/><rect x="211" y="301" width="2" height="1"/><rect x="211" y="346" width="2" height="1"/><rect x="211" y="358" width="2" height="1"/><rect x="211" y="370" width="2" height="1"/><rect x="209" y="382" width="6" height="1"/><rect x="211" y="394" width="2" height="1"/><rect x="211" y="406" width="2" height="1"/><rect x="211" y="418" width="2" height="1"/><rect x="211" y="442" width="2" height="1"/><rect x="211" y="454" width="2" height="1"/><rect x="211" y="466" width="2" height="1"/><rect x="209" y="478" width="6" height="1"/><rect x="211" y="490" width="2" height="1"/><rect x="211" y="502" width="2" height="1"/><rect x="211" y="514" width="2" height="1"/><rect x="208" y="322" width="8" height="1"/><rect x="208" y="324" width="8" height="1"/><rect x="208" y="326" width="8" height="1"/></g><g font-family="Liberation Sans, sans-serif" font-size="7" font-weight="bold" fill="#9a7a5a" text-anchor="middle" shape-rendering="auto"><text x="212.500" y="314">1</text><text x="212.500" y="431">1</text><text x="212.500" y="529">1</text></g></svg>
<div class="a" id="surface" style="left:231px;top:217px;width:818px;height:311px;border:1px solid #c4c4c4;background:#fff"></div>
<div class="a" id="band-topmargin" style="left:233px;top:218px;width:815px;height:96px;background-image:linear-gradient(to right,transparent 47px,#e3e3e3 47px),linear-gradient(to bottom,transparent 47px,#e3e3e3 47px),linear-gradient(to right,transparent 11px,#f1f1f1 11px),linear-gradient(to bottom,transparent 11px,#f1f1f1 11px);background-size:48px 48px,48px 48px,12px 12px,12px 12px;"></div>
<div class="a" id="band-strip-detail" style="left:232px;top:314px;width:816px;height:21px;background:#f4f4f4;border-top:1px solid #c4c4c4;border-bottom:1px solid #d2d2d2"></div>
<svg style="left:238px;top:322px" width="7" height="6" viewBox="0 0 7 6"><path d="M0 0h7L3.500 6z" fill="#707070"/></svg>
<svg style="left:252px;top:317px" width="13" height="15" viewBox="0 0 13 15"><rect x="0.500" y="0.500" width="12" height="14" rx="1.500" fill="#fff" stroke="#4f84cc"/><path d="M0.500 2.500h12M0.500 12.500h12M1.900 0.500v14M11.200 0.500v14" stroke="#94b8e8" stroke-width="1" fill="none"/><rect x="2.900" y="3.700" width="7.400" height="7.600" fill="#fff" stroke="#6a7078" stroke-width="1.200"/><path d="M4.500 5.500h4.500M4.500 7.500h4.500M4.500 9.500h3" stroke="#6a7078" stroke-width="1"/></svg>
<span class="t" style="left:270px;top:319px;font-size:12px;color:#7a7a7a;letter-spacing:-0.35px">Detail</span>
<div class="a" id="band-detail" style="left:233px;top:335px;width:815px;height:96px;background-image:linear-gradient(to right,transparent 47px,#e3e3e3 47px),linear-gradient(to bottom,transparent 47px,#e3e3e3 47px),linear-gradient(to right,transparent 11px,#f1f1f1 11px),linear-gradient(to bottom,transparent 11px,#f1f1f1 11px);background-size:48px 48px,48px 48px,12px 12px,12px 12px;"></div>
<div class="a" id="band-bottommargin" style="left:233px;top:431px;width:815px;height:96px;background-image:linear-gradient(to right,transparent 47px,#e3e3e3 47px),linear-gradient(to bottom,transparent 47px,#e3e3e3 47px),linear-gradient(to right,transparent 11px,#f1f1f1 11px),linear-gradient(to bottom,transparent 11px,#f1f1f1 11px);background-size:48px 48px,48px 48px,12px 12px,12px 12px;"></div>
<div class="a" style="left:328px;top:218px;width:1px;height:96px;background-color:#fff;background-image:linear-gradient(to bottom,#7d7d7d 3px,transparent 3px);background-size:1px 4px;"></div>
<div class="a" style="left:328px;top:335px;width:1px;height:192px;background-color:#fff;background-image:linear-gradient(to bottom,#7d7d7d 3px,transparent 3px);background-size:1px 4px;"></div>
<div class="a" style="left:952px;top:218px;width:1px;height:96px;background-color:#fff;background-image:linear-gradient(to bottom,#7d7d7d 3px,transparent 3px);background-size:1px 4px;"></div>
<div class="a" style="left:952px;top:335px;width:1px;height:192px;background-color:#fff;background-image:linear-gradient(to bottom,#7d7d7d 3px,transparent 3px);background-size:1px 4px;"></div>
<div class="a" style="left:232px;top:431px;width:816px;height:1px;background-color:#fff;background-image:linear-gradient(to right,#7d7d7d 3px,transparent 3px);background-size:4px 1px;"></div>
<div class="a" id="hscroll" style="left:226px;top:612px;width:831px;height:17px;background:#cbcbcb"></div>
<div class="a" style="left:226px;top:612px;width:17px;height:17px;background:#f0f0f0"></div>
<div class="a" style="left:1039px;top:612px;width:18px;height:17px;background:#f0f0f0"></div>
<svg style="left:231px;top:617px" width="7" height="8" viewBox="0 0 7 8"><path d="M5.800 0.600L1.200 4l4.600 3.400" fill="none" stroke="#555" stroke-width="1.700"/></svg>
<svg style="left:1044px;top:617px" width="7" height="8" viewBox="0 0 7 8"><path d="M1.200 0.600L5.800 4l-4.600 3.400" fill="none" stroke="#555" stroke-width="1.700"/></svg>
<!-- ===== Group and Sort panel ===== -->
<div class="a panel" id="groupsort" style="left:195px;top:631px;width:860px;height:205px"></div>
<span class="t ptitle" style="left:207.500px;top:642px;font-size:14px;letter-spacing:-0.07px">Group and Sort</span>
<svg style="left:1015px;top:645px" width="7" height="8" viewBox="0 0 7 8" shape-rendering="crispEdges"><g fill="#6a6a6a"><rect x="1" y="0" width="5" height="1"/><rect x="1" y="1" width="1" height="4"/><rect x="3" y="1" width="3" height="4"/><rect x="0" y="5" width="7" height="1"/><rect x="3" y="6" width="1" height="2"/></g></svg>
<svg style="left:1033px;top:645px" width="9" height="7" viewBox="0 0 9 7"><path d="M0.600 0.200l7.800 6.600M8.400 0.200L0.600 6.800" stroke="#666" stroke-width="1.600" fill="none"/></svg>
<svg id="gs-toolbar-icons" style="left:0;top:0" width="1310" height="700" viewBox="0 0 1310 700">
  <rect x="205.500" y="674.500" width="9" height="9.500" rx="1.800" fill="#c8c8c8" stroke="#a8a8a8"/>
  <rect x="209.500" y="678.500" width="9.500" height="9" rx="1.800" fill="#c4c4c4" stroke="#a2a2a2"/>
  <path d="M217 673.500h2.500v2.500M204.500 686v2.500h2.500" fill="none" stroke="#555" stroke-width="1"/>
  <path d="M302.500 675.500h7.800l-3.900 6z" fill="#d2d2d2" stroke="#a4a4a4" stroke-width="1"/>
  <path d="M311.800 680l4.200 6.500h-8.400z" fill="#c6c6c6" stroke="#a4a4a4" stroke-width="1"/>
  <g fill="#c6c6c6" stroke="#b2b2b2" stroke-width=".500"><rect x="387.250" y="678.900" width="13.500" height="4.200" transform="rotate(45 394 681)"/><rect x="387.250" y="678.900" width="13.500" height="4.200" transform="rotate(-45 394 681)"/></g>
  <g fill="#c6c6c6"><rect x="387.750" y="679.300" width="12.500" height="3.400" transform="rotate(45 394 681)"/><rect x="387.750" y="679.300" width="12.500" height="3.400" transform="rotate(-45 394 681)"/></g>
  <circle cx="464" cy="681" r="7.500" fill="#d0d0d0" stroke="#b4b4b4"/>
  <path d="M464 676l4.500 4.500h-2.500v4h-4v-4h-2.500z" fill="#e8e8e8" stroke="#a6a6a6" stroke-width=".8"/>
  <circle cx="542" cy="681" r="7.500" fill="#d0d0d0" stroke="#b4b4b4"/>
  <path d="M542 686l4.500-4.500h-2.500v-4h-4v4h-2.500z" fill="#e8e8e8" stroke="#a6a6a6" stroke-width=".8"/>
</svg>
<span class="t" style="left:224.5px;top:675px;font-size:12px;color:#9e9e9e;letter-spacing:-0.24px">Add a Group</span>
<span class="t" style="left:321px;top:675px;font-size:12px;color:#9e9e9e;letter-spacing:-0.2px">Add a Sort</span>
<span class="t" style="left:406.5px;top:675px;font-size:12px;color:#9e9e9e;letter-spacing:-0.35px">Delete</span>
<span class="t" style="left:476.5px;top:675px;font-size:12px;color:#9e9e9e;letter-spacing:-0.19px">Move Up</span>
<span class="t" style="left:554.5px;top:675px;font-size:12px;color:#9e9e9e;letter-spacing:-0.06px">Move Down</span>
<div class="a" style="left:447px;top:672px;width:1px;height:18px;background:#c4c4c4"></div>
<div class="a" id="gs-grid" style="left:197px;top:695px;width:856px;height:111px;border:1px solid #a6a6a6;background:#fff"></div>
<div class="a" style="left:198px;top:715px;width:854px;height:1px;background:#a6a6a6"></div>
<div class="a" style="left:424px;top:696px;width:1px;height:19px;background:#a6a6a6"></div>
<div class="a" style="left:516px;top:696px;width:1px;height:19px;background:#a6a6a6"></div>
<div class="a" style="left:608px;top:696px;width:1px;height:19px;background:#a6a6a6"></div>
<div class="a" style="left:700px;top:696px;width:1px;height:19px;background:#a6a6a6"></div>
<div class="a" style="left:1051px;top:696px;width:1px;height:19px;background:#a6a6a6"></div>
<span class="t" style="left:201.5px;top:700px;color:#262626;letter-spacing:-0.42px">Field Name</span>
<span class="t" style="left:428.5px;top:700px;color:#262626;letter-spacing:-0.1px">Sort Order</span>
<span class="t" style="left:520.5px;top:700px;color:#262626;letter-spacing:-0.34px">Show Header</span>
<span class="t" style="left:612.5px;top:700px;color:#262626;letter-spacing:-0.24px">Show Footer</span>
<span class="t" style="left:428px;top:756px;color:#555;letter-spacing:.035px">To add a new grouping or sorting level, first provide a data source for the report.</span>
<svg id="gs-tab-icons" style="left:0;top:0" width="1310" height="840" viewBox="0 0 1310 840">
  <rect x="211.500" y="812.500" width="8" height="7" rx="1" fill="#9cc0ec" stroke="#4a78b8"/>
  <rect x="213.500" y="814.500" width="8" height="6" rx="1" fill="#b8d4f4" stroke="#4a78b8"/>
  <path d="M213 818.500h11.500l-5.700 8z" fill="#8ed02c" stroke="#4a8a14" stroke-width="1"/>
  <rect x="326.500" y="812.500" width="11" height="11" fill="#f4f8fd" stroke="#5a86c8"/>
  <path d="M330.500 815c-1.500.5-1 2-2 3 1 1 .5 2.500 2 3M333.500 815c1.500.5 1 2 2 3" fill="none" stroke="#5a6a88" stroke-width=".9"/>
  <circle cx="335.500" cy="822" r="4.300" fill="#d83a2c" stroke="#a01c14" stroke-width=".6"/>
  <path d="M333.700 820.200l3.600 3.600M337.300 820.200l-3.600 3.600" stroke="#fff" stroke-width="1.300"/>
</svg>
<span class="t" style="left:229.500px;top:815px;color:#1473c8;letter-spacing:-0.13px">Group and Sort</span>
<span class="t" style="left:344.500px;top:815px;color:#262626;letter-spacing:-0.17px">Scripts Errors</span>
<div class="a" style="left:314px;top:808px;width:1px;height:24px;background:#d0d0d0"></div>
<div class="a" style="left:420px;top:808px;width:1px;height:24px;background:#d0d0d0"></div>
<!-- ===== Report Explorer panel ===== -->
<div class="a panel" id="report-explorer" style="left:1059px;top:149px;width:246px;height:332px"></div>
<span class="t ptitle" style="left:1072px;top:160px;font-size:14px;letter-spacing:-0.14px">Report Explorer</span>
<div class="a" style="left:1245px;top:163px;width:9px;height:7px;border:1px solid #6a6a6a;border-top-width:2px"></div>
<svg style="left:1265px;top:163px" width="7" height="8" viewBox="0 0 7 8" shape-rendering="crispEdges"><g fill="#6a6a6a"><rect x="1" y="0" width="5" height="1"/><rect x="1" y="1" width="1" height="4"/><rect x="3" y="1" width="3" height="4"/><rect x="0" y="5" width="7" height="1"/><rect x="3" y="6" width="1" height="2"/></g></svg>
<svg style="left:1283px;top:163px" width="9" height="7" viewBox="0 0 9 7"><path d="M0.600 0.200l7.800 6.600M8.400 0.200L0.600 6.800" stroke="#666" stroke-width="1.600" fill="none"/></svg>
<div class="a" id="re-tree" style="left:1061px;top:185px;width:242px;height:266px;border:1px solid #a6a6a6;background:#fff"></div>
<div class="a" style="left:1097px;top:186px;width:205px;height:18px;background:#deeaf5"></div>
<svg style="left:1069px;top:193px" width="6" height="6" viewBox="0 0 6 6"><path d="M6 0v6H0z" fill="#8a8a8a"/></svg>
<svg id="re-icons" style="left:0;top:0" width="1310" height="480" viewBox="0 0 1310 480">
  <rect x="1081.500" y="189.500" width="9" height="11" rx="1" fill="#fff" stroke="#5a86c8"/>
  <rect x="1084" y="187.500" width="4.500" height="3" rx="1" fill="#c8dcf4" stroke="#4a78c0" stroke-width=".9"/>
  <path d="M1084.500 189.500v11M1081.500 196.500h6" stroke="#94b8e8" stroke-width="1" fill="none"/>
  <rect x="1086.500" y="194.500" width="8" height="3.400" rx=".8" fill="#f29a4a" stroke="#d8620c" stroke-width=".9"/>
  <rect x="1086.500" y="199.300" width="8" height="3.400" rx=".8" fill="#8ccc30" stroke="#4a9a10" stroke-width=".9"/>
  <rect x="1099.500" y="205.5" width="12" height="14" rx="1" fill="#f6f8fc" stroke="#4f84cc"/>
  <path d="M1101.500 205.5 v14M1109.500 205.5 v14M1099.500 208.5 h12M1099.500 216.5 h12" stroke="#94b8e8" stroke-width="1" fill="none"/>
  <rect x="1099.500" y="205.5" width="12" height="3" rx=".8" fill="#f29a4a" stroke="#d8620c" stroke-width=".9"/>
  <rect x="1099.500" y="223.5" width="12" height="14" rx="1" fill="#f6f8fc" stroke="#4f84cc"/>
  <path d="M1101.500 223.5 v14M1109.500 223.5 v14M1099.500 226.5 h12M1099.500 234.5 h12" stroke="#94b8e8" stroke-width="1" fill="none"/>
  <rect x="1101.900" y="226.7" width="7.400" height="7.600" fill="#fff" stroke="#6a7078" stroke-width="1.200"/>
  <path d="M1103.500 228.5 h4.500M1103.500 230.5 h4.500M1103.500 232.5 h3" stroke="#6a7078" stroke-width="1"/>
  <rect x="1099.500" y="241.5" width="12" height="14" rx="1" fill="#f6f8fc" stroke="#4f84cc"/>
  <path d="M1101.500 241.5 v14M1109.500 241.5 v14M1099.500 244.5 h12M1099.500 252.5 h12" stroke="#94b8e8" stroke-width="1" fill="none"/>
  <rect x="1099.500" y="252.5" width="12" height="3" rx=".8" fill="#8ccc30" stroke="#4a9a10" stroke-width=".9"/>
  <rect x="1074.500" y="459.500" width="9" height="11" rx="1" fill="#e2e6ee" stroke="#46526e" stroke-width="1.200"/>
  <rect x="1076.500" y="462" width="5" height="7" fill="#f6f8fb"/>
  <rect x="1076.500" y="457.500" width="5" height="3" rx="1" fill="#c8dcf4" stroke="#4a78c0" stroke-width=".9"/>
  <circle cx="1086" cy="466" r="3.700" fill="#f8b060" stroke="#d0701a" stroke-width="1.200"/>
  <rect x="1080.500" y="466.500" width="6" height="6" fill="#9cd838" stroke="#4a9a10"/>
  <path d="M1194 460.500c0-2.500 9-2.500 9 0v9c0 2.500-9 2.500-9 0z" fill="#f5bc62" stroke="#c07a1c" stroke-width="1.100"/>
  <ellipse cx="1198.500" cy="460.500" rx="4.500" ry="1.800" fill="#fbdca0" stroke="#c07a1c" stroke-width="1"/>
  <rect x="1198.500" y="463.500" width="9" height="4" rx="1" fill="#fff" stroke="#3a6ab8"/>
  <rect x="1198.500" y="468.500" width="9" height="4" rx="1" fill="#fff" stroke="#3a6ab8"/>
</svg>
<span class="t" style="left:1100.5px;top:190px;color:#262626;letter-spacing:-0.22px">CustomQueryReportBase</span>
<span class="t" style="left:1118.5px;top:208px;color:#262626;letter-spacing:-0.15px">TopMargin</span>
<span class="t" style="left:1118.5px;top:226px;color:#262626;letter-spacing:-0.2px">Detail</span>
<span class="t" style="left:1118.5px;top:244px;color:#262626;letter-spacing:-0.15px">BottomMargin</span>
<span class="t" style="left:1093.500px;top:460px;color:#1473c8;letter-spacing:-0.11px">Report Explorer</span>
<span class="t" style="left:1211.500px;top:460px;color:#262626;letter-spacing:-0.29px">Field List</span>
<div class="a" style="left:1181px;top:453px;width:1px;height:24px;background:#d0d0d0"></div>
<div class="a" style="left:1264px;top:453px;width:1px;height:24px;background:#d0d0d0"></div>
<!-- ===== Property Grid panel ===== -->
<div class="a panel" id="property-grid" style="left:1059px;top:485px;width:246px;height:351px"></div>
<span class="t ptitle" style="left:1072px;top:496px;font-size:14px;letter-spacing:-0.21px">Property Grid</span>
<div class="a" style="left:1245px;top:499px;width:9px;height:7px;border:1px solid #6a6a6a;border-top-width:2px"></div>
<svg style="left:1265px;top:499px" width="7" height="8" viewBox="0 0 7 8" shape-rendering="crispEdges"><g fill="#6a6a6a"><rect x="1" y="0" width="5" height="1"/><rect x="1" y="1" width="1" height="4"/><rect x="3" y="1" width="3" height="4"/><rect x="0" y="5" width="7" height="1"/><rect x="3" y="6" width="1" height="2"/></g></svg>
<svg style="left:1283px;top:499px" width="9" height="7" viewBox="0 0 9 7"><path d="M0.600 0.200l7.800 6.600M8.400 0.200L0.600 6.800" stroke="#666" stroke-width="1.600" fill="none"/></svg>
<div class="a" id="pg-combo" style="left:1061px;top:521px;width:242px;height:22px;border:1px solid #a6a6a6;background:#fff">
  <span class="t" style="left:3.500px;top:5px;font-weight:bold;font-size:11.500px;color:#262626;letter-spacing:.13px">CustomQueryReportBase  Report</span>
  <div class="a" style="left:224px;top:-1px;width:17px;height:22px;border:1px solid #a6a6a6;background:#efefef"></div>
  <svg style="left:229px;top:7px" width="8" height="6" viewBox="0 0 8 6"><path d="M0.600 0.800l3.400 3.600 3.400-3.600" fill="none" stroke="#555" stroke-width="1.500"/></svg>
</div>
<div class="a" style="left:1063px;top:545px;width:26px;height:24px;background:#b1d6f0"></div>
<svg id="pg-toolbar" style="left:0;top:0" width="1310" height="580" viewBox="0 0 1310 580">
  <rect x="1068.500" y="549.5" width="6" height="6" rx="1" fill="#fff" stroke="#1a6ae8"/>
  <path d="M1070 552.5 h3M1071.500 551 v3" stroke="#111" stroke-width="1"/>
  <path d="M1076 550.5 h4M1076 552.5 h4M1076 554.5 h4" stroke="#333" stroke-width="1"/>
  <path d="M1081 552.5 h3M1081 554.5 h3" stroke="#8a8a8a" stroke-width="1"/>
  <rect x="1068.500" y="558.5" width="6" height="6" rx="1" fill="#fff" stroke="#1a6ae8"/>
  <path d="M1070 561.5 h3M1071.500 560 v3" stroke="#111" stroke-width="1"/>
  <path d="M1076 559.5 h4M1076 561.5 h4M1076 563.5 h4" stroke="#333" stroke-width="1"/>
  <path d="M1081 561.5 h3M1081 563.5 h3" stroke="#8a8a8a" stroke-width="1"/>
  <text x="1094.600" y="556" font-family="Liberation Sans, sans-serif" font-size="10" font-weight="bold" fill="#1a5ae0">A</text>
  <text x="1095" y="564" font-family="Liberation Sans, sans-serif" font-size="10" font-weight="bold" fill="#8c1010">Z</text>
  <path d="M1106.500 549v12" stroke="#111" stroke-width="1.200"/><path d="M1104 558.800h5.200l-2.600 5.400z" fill="#111"/>
</svg>
<div class="a" id="pg-grid" style="left:1061px;top:571px;width:242px;height:201px;border:1px solid #a6a6a6;background:#fff;overflow:hidden">
  <div class="a" style="left:0;top:0;width:240px;height:1px;background:#cfcfcf"></div>
  <div class="a" style="left:0;top:0;width:1px;height:199px;background:#cfcfcf"></div>
  <div class="a" style="left:222px;top:0;width:18px;height:199px;background:#f0f0f0;border-left:1px solid #a6a6a6"></div>
  <div class="a" style="left:223px;top:17px;width:17px;height:27px;background:#c8c8c8"></div>
  <svg style="left:228px;top:5px" width="8" height="6" viewBox="0 0 8 6"><path d="M0.600 5.200l3.400-3.600 3.400 3.600" fill="none" stroke="#555" stroke-width="1.500"/></svg>
  <svg style="left:228px;top:187px" width="8" height="6" viewBox="0 0 8 6"><path d="M0.600 0.800l3.400 3.600 3.400-3.600" fill="none" stroke="#555" stroke-width="1.500"/></svg>
  <span class="t" style="left:20.500px;top:4px;font-weight:bold;font-size:11.500px;color:#0072c6;letter-spacing:.16px">Appearance</span>
  <svg style="left:210px;top:7.500px" width="7" height="4" viewBox="0 0 7 4"><path d="M0 4h7L3.500 0z" fill="#555"/></svg>
  <div class="a" style="left:16px;top:18px;width:1px;height:181px;background:#c8c8c8"></div>
  <div class="a" style="left:111px;top:18px;width:1px;height:181px;background:#c8c8c8"></div>
  <div class="a" style="left:16px;top:18px;width:206px;height:1px;background:#c8c8c8"></div>
  <div class="a" style="left:16px;top:37px;width:206px;height:1px;background:#c8c8c8"></div>
  <div class="a" style="left:16px;top:56px;width:206px;height:1px;background:#c8c8c8"></div>
  <div class="a" style="left:16px;top:75px;width:206px;height:1px;background:#c8c8c8"></div>
  <div class="a" style="left:16px;top:92px;width:206px;height:1px;background:#c8c8c8"></div>
  <div class="a" style="left:16px;top:111px;width:206px;height:1px;background:#c8c8c8"></div>
  <div class="a" style="left:16px;top:130px;width:206px;height:1px;background:#c8c8c8"></div>
  <div class="a" style="left:16px;top:149px;width:206px;height:1px;background:#c8c8c8"></div>
  <div class="a" style="left:16px;top:168px;width:206px;height:1px;background:#c8c8c8"></div>
  <div class="a" style="left:16px;top:187px;width:206px;height:1px;background:#c8c8c8"></div>
  <div class="a" style="left:17px;top:21px;width:94px;height:14px;overflow:hidden"><span class="t" style="left:17.500px;top:2px;color:#262626;letter-spacing:-0.25px">Background Color</span></div>
  <div class="a" style="left:118px;top:23px;width:22px;height:10px;border:1px solid #000;background:#fff"></div>
  <span class="t" style="left:143.500px;top:23px;color:#262626">Transparent</span>
  <div class="a" style="left:17px;top:40px;width:94px;height:14px;overflow:hidden"><span class="t" style="left:17.500px;top:2px;color:#262626;letter-spacing:-0.25px">Border Color</span></div>
  <div class="a" style="left:118px;top:42px;width:22px;height:10px;border:1px solid #000;background:#000"></div>
  <span class="t" style="left:143.500px;top:42px;color:#262626">Black</span>
  <div class="a" style="left:17px;top:59px;width:94px;height:14px;overflow:hidden"><span class="t" style="left:17.500px;top:2px;color:#262626;letter-spacing:-0.25px">Border Dash Style</span></div>
  <span class="t" style="left:115.500px;top:61px;color:#262626;">Solid</span>
  <div class="a" style="left:17px;top:77px;width:94px;height:14px;overflow:hidden"><span class="t" style="left:17.500px;top:2px;color:#262626;letter-spacing:-0.25px">Border Width</span></div>
  <span class="t" style="left:115.500px;top:79px;color:#262626;">1</span>
  <div class="a" style="left:17px;top:95px;width:94px;height:14px;overflow:hidden"><span class="t" style="left:17.500px;top:2px;color:#262626;letter-spacing:-0.25px">Borders</span></div>
  <span class="t" style="left:115.500px;top:97px;color:#262626;">None</span>
  <div class="a" style="left:17px;top:114px;width:94px;height:14px;overflow:hidden"><span class="t" style="left:17.500px;top:2px;color:#262626;letter-spacing:-0.25px">Font</span></div>
  <span class="t" style="left:115.500px;top:116px;color:#262626; letter-spacing:-0.18px;">Times New Roman,...</span>
  <div class="a" style="left:17px;top:133px;width:94px;height:14px;overflow:hidden"><span class="t" style="left:17.500px;top:2px;color:#262626;letter-spacing:-0.25px">Foreground Color</span></div>
  <div class="a" style="left:118px;top:135px;width:22px;height:10px;border:1px solid #000;background:#000"></div>
  <span class="t" style="left:143.500px;top:135px;color:#262626">Black</span>
  <div class="a" style="left:17px;top:152px;width:94px;height:14px;overflow:hidden"><span class="t" style="left:17.500px;top:2px;color:#262626;letter-spacing:-0.25px">Formatting Rule Sheets</span></div>
  <span class="t" style="left:115.500px;top:154px;color:#262626;">(Collection)</span>
  <div class="a" style="left:17px;top:171px;width:94px;height:14px;overflow:hidden"><span class="t" style="left:17.500px;top:2px;color:#262626;letter-spacing:-0.25px">Formatting Rules</span></div>
  <span class="t" style="left:115.500px;top:173px;color:#262626;">(Collection)</span>
  <div class="a" style="left:17px;top:190px;width:94px;height:14px;overflow:hidden"><span class="t" style="left:17.500px;top:2px;color:#262626;letter-spacing:-0.25px">Padding</span></div>
  <span class="t" style="left:115.500px;top:192px;color:#262626;">0, 0, 0, 0</span>
  <svg style="left:23px;top:117px" width="4" height="8" viewBox="0 0 4 8"><path d="M0 0l4 4-4 4z" fill="#707070"/></svg>
  <svg style="left:23px;top:193px" width="4" height="8" viewBox="0 0 4 8"><path d="M0 0l4 4-4 4z" fill="#707070"/></svg>
</div>
<div class="a" style="left:1173px;top:777px;width:2px;height:2px;background:#555"></div>
<div class="a" style="left:1177px;top:777px;width:2px;height:2px;background:#555"></div>
<div class="a" style="left:1181px;top:777px;width:2px;height:2px;background:#555"></div>
<div class="a" style="left:1185px;top:777px;width:2px;height:2px;background:#555"></div>
<div class="a" style="left:1189px;top:777px;width:2px;height:2px;background:#555"></div>
<div class="a" id="pg-description" style="left:1061px;top:784px;width:242px;height:50px;border:1px solid #cfcfcf;background:#fff"></div>
<!-- ===== Status bar ===== -->
<div class="a" id="statusbar" style="left:2px;top:838px;width:1305px;height:24px;background:#0072c6"></div>
<span class="t" style="left:10px;top:845px;color:#fff;letter-spacing:-0.08px">CustomQueryReportBase { PaperKind: Letter }</span>
<div class="a" style="left:244px;top:841px;width:1px;height:17px;background:#fff"></div>
<span class="t" style="left:1097.500px;top:845px;color:#fff;letter-spacing:-0.14px">100%</span>
<div class="a" style="left:1144px;top:849px;width:7px;height:1px;background:#fff"></div>
<div class="a" style="left:1158px;top:849px;width:102px;height:1px;background:#fff"></div>
<div class="a" style="left:1207px;top:845px;width:3px;height:9px;background:#b8d4ee"></div>
<div class="a" style="left:1267px;top:849px;width:7px;height:1px;background:#fff"></div>
<div class="a" style="left:1270px;top:846px;width:1px;height:7px;background:#fff"></div>
<div class="a" style="left:1304px;top:851px;width:2px;height:2px;background:#e6d2b4"></div>
<div class="a" style="left:1301px;top:854px;width:2px;height:2px;background:#e6d2b4"></div>
<div class="a" style="left:1304px;top:854px;width:2px;height:2px;background:#e6d2b4"></div>
<div class="a" style="left:1298px;top:857px;width:2px;height:2px;background:#e6d2b4"></div>
<div class="a" style="left:1301px;top:857px;width:2px;height:2px;background:#e6d2b4"></div>
<div class="a" style="left:1304px;top:857px;width:2px;height:2px;background:#e6d2b4"></div>
</body>
</html>
